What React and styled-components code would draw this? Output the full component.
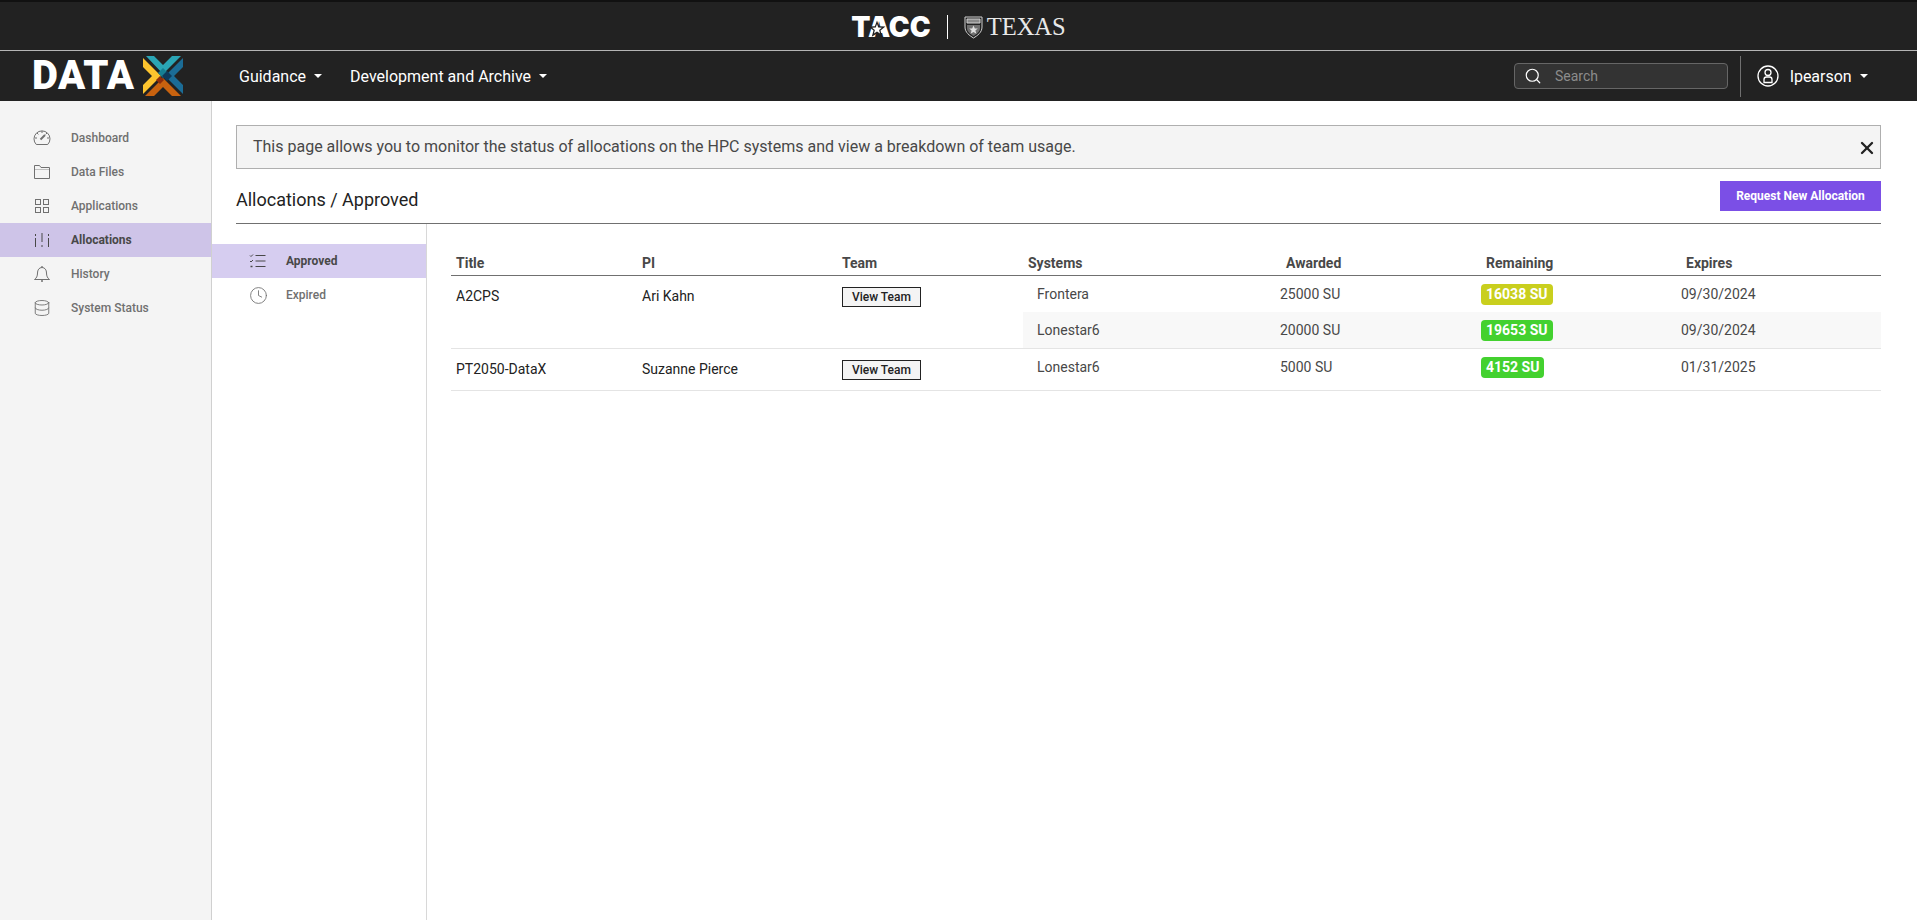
import React from 'react'
import styled, { createGlobalStyle } from 'styled-components'
import { Database, Clock, Search, X } from 'lucide-react'

const GlobalStyle = createGlobalStyle`
    html, body {
        margin: 0;
        padding: 0;
        background: #fff;
    }
    * {
        box-sizing: border-box;
    }
    body {
        font-family: Roboto, "Liberation Sans", sans-serif;
    }
`

const IconSvg = styled.svg.attrs({
    width: 18,
    height: 18,
    viewBox: '0 0 18 18',
    fill: 'none',
    stroke: 'currentColor',
    strokeWidth: 1,
})``

function GaugeIcon() {
    return (
        <IconSvg>
            <path d="M3.300 15.500A8 8 0 1 1 14.700 15.500z" />
            <path d="M9 2v2M2 9h2M14 9h2M4 4l1.400 1.400M14 4l-1.400 1.400" />
            <path d="M7.500 10.500L12 6" strokeWidth="2" />
        </IconSvg>
    )
}

function FolderIcon() {
    return (
        <IconSvg>
            <path d="M1.500 15.500V2.500h5l1.500 2h8.500v11z" />
            <path d="M1.500 6.500h15" opacity="0.4" />
        </IconSvg>
    )
}

function GridIcon() {
    return (
        <IconSvg>
            <rect x="2.500" y="2.500" width="5" height="5" />
            <rect x="10.500" y="2.500" width="5" height="5" />
            <rect x="2.500" y="10.500" width="5" height="5" />
            <rect x="10.500" y="10.500" width="5" height="5" />
        </IconSvg>
    )
}

function SlidersIcon() {
    return (
        <IconSvg>
            <path d="M2.500 3v2M2.500 7v9M9 2v9M9 14v2M15.500 3v2M15.500 7v9" />
        </IconSvg>
    )
}

function BellIcon() {
    return (
        <IconSvg>
            <path d="M9 2.500c-3 0-4.500 2.500-4.500 5.500 0 3-1 5.200-3 6.500h15c-2-1.300-3-3.500-3-6.500 0-3-1.500-5.500-4.500-5.500z" />
            <path d="M9 1v1.500M8 16h2" strokeWidth="1.300" />
        </IconSvg>
    )
}

function ChecksIcon() {
    return (
        <IconSvg>
            <path d="M6.500 3.500h10M6.500 9h10M6.500 14.500h10" strokeWidth="1.200" />
            <path d="M1 3.500l1 1 2-2M1 9l1 1 2-2" />
            <path d="M1.500 14.500h2" strokeWidth="1.500" />
        </IconSvg>
    )
}

function LogoX() {
    return (
        <svg width="40" height="40" viewBox="0 0 40 40">
            <polygon points="3,0 11,0 20,9 29,0 38,0 20,18" fill="#2aa5b5" />
            <polygon points="0,2 18,20 0,38 0,29 9,20 0,11" fill="#fdc42e" />
            <polygon points="40,2 22,20 40,38 40,29 31,20 40,11" fill="#1b6c96" />
            <polygon points="2,40 11,40 20,31 29,40 38,40 20,22" fill="#c8620f" />
            <polygon points="20,12 25,17 20,22 15,17" fill="#167f93" />
            <polygon points="24,15 29,20 24,25 19,20" fill="#0d3a5c" />
            <polygon points="17,20 21,24 17,28 13,24" fill="#8f2d0a" />
        </svg>
    )
}

function Shield() {
    return (
        <svg width="19" height="23" viewBox="0 0 19 23" fill="none" stroke="#d0d0d0" strokeWidth="1">
            <path d="M1 1h17v10c0 5.500-4.500 8.500-8.500 11C5.500 19.500 1 16.500 1 11z" />
            <path d="M3 3h13v4H3z" fill="#8a8a8a" />
            <path d="M3 9h13v3c0 3.500-3 5.800-6.500 8C6 17.800 3 15.500 3 12z" fill="#707070" stroke="none" />
            <path d="M9.500 9.500l1.300 3h3l-2.400 2 1 3.200-2.900-1.800-2.900 1.800 1-3.200-2.400-2h3z" fill="#e0e0e0" stroke="none" />
        </svg>
    )
}

function UserIcon() {
    return (
        <svg width="22" height="22" viewBox="0 0 22 22" fill="none" stroke="#fff" strokeWidth="1.300">
            <circle cx="11" cy="11" r="10" />
            <circle cx="11" cy="7.500" r="3" />
            <path d="M7 17.500v-3c0-1.500 1-2.500 2.500-2.500h3c1.500 0 2.500 1 2.500 2.500v3z" />
        </svg>
    )
}

const navItems = [
    { label: 'Dashboard', icon: <GaugeIcon /> },
    { label: 'Data Files', icon: <FolderIcon /> },
    { label: 'Applications', icon: <GridIcon /> },
    { label: 'Allocations', icon: <SlidersIcon />, active: true },
    { label: 'History', icon: <BellIcon /> },
    { label: 'System Status', icon: <Database size={18} strokeWidth={1.200} /> },
]

const allocations = [
    {
        title: 'A2CPS',
        pi: 'Ari Kahn',
        systems: [
            { name: 'Frontera', awarded: '25000 SU', remaining: '16038 SU', low: true, expires: '09/30/2024' },
            { name: 'Lonestar6', awarded: '20000 SU', remaining: '19653 SU', expires: '09/30/2024' },
        ],
    },
    {
        title: 'PT2050-DataX',
        pi: 'Suzanne Pierce',
        systems: [
            { name: 'Lonestar6', awarded: '5000 SU', remaining: '4152 SU', expires: '01/31/2025' },
        ],
    },
]

function App() {
    return (
        <Page>
            <GlobalStyle />
            <TopBar>
                <Tacc>
                    TACC
                    <TaccStar viewBox="0 0 20 20">
                        <polygon points="10,-2 13,6 22,6.500 15,12 17.500,21 10,16.500 2.500,21 5,12 -2,6.500 7,6" fill="#222" />
                        <polygon points="10,3 11.800,7.800 17,8.200 13,11.400 14.300,16.500 10,13.700 5.700,16.500 7,11.400 3,8.200 8.200,7.800" fill="#fff" />
                    </TaccStar>
                </Tacc>
                <TopDivider />
                <Shield />
                <Texas>TEXAS</Texas>
            </TopBar>
            <NavBar>
                <Logo>
                    <LogoText>DATA</LogoText>
                    <LogoX />
                </Logo>
                <NavLink>Guidance<Caret /></NavLink>
                <NavLink>Development and Archive<Caret /></NavLink>
                <SearchBox>
                    <Search size={18} strokeWidth={1.600} color="#fff" />
                    <span>Search</span>
                </SearchBox>
                <NavDivider />
                <UserMenu>
                    <UserIcon />
                    <UserName>lpearson</UserName>
                    <Caret />
                </UserMenu>
            </NavBar>
            <Layout>
                <Sidebar>
                    {navItems.map((item) => (
                        <SideItem key={item.label} $active={item.active}>
                            <SideIcon>{item.icon}</SideIcon>
                            {item.label}
                        </SideItem>
                    ))}
                </Sidebar>
                <Content>
                    <Banner>
                        This page allows you to monitor the status of allocations on the HPC systems and view a breakdown of team usage.
                        <CloseIcon><X size={20} strokeWidth={2.800} /></CloseIcon>
                    </Banner>
                    <TitleRow>
                        <Title>Allocations / Approved</Title>
                        <RequestButton>Request New Allocation</RequestButton>
                    </TitleRow>
                    <Split>
                        <SubNav>
                            <SubItem $active>
                                <SubIcon><ChecksIcon /></SubIcon>
                                Approved
                            </SubItem>
                            <SubItem>
                                <SubIcon><Clock size={19} strokeWidth={1.100} /></SubIcon>
                                Expired
                            </SubItem>
                        </SubNav>
                        <TableWrap>
                            <HeadRow>
                                <HeadCell>Title</HeadCell>
                                <HeadCell>PI</HeadCell>
                                <HeadCell>Team</HeadCell>
                                <HeadCell>Systems</HeadCell>
                                <HeadCell>Awarded</HeadCell>
                                <HeadCell>Remaining</HeadCell>
                                <HeadCell>Expires</HeadCell>
                            </HeadRow>
                            {allocations.map((row) => (
                                <Row key={row.title}>
                                    <TitleCell>{row.title}</TitleCell>
                                    <PiCell>{row.pi}</PiCell>
                                    <TeamCell><TeamButton>View Team</TeamButton></TeamCell>
                                    <div>
                                        {row.systems.map((s, i) => (
                                            <SystemRow key={s.name} $odd={i % 2 === 1}>
                                                <SystemName>{s.name}</SystemName>
                                                <span>{s.awarded}</span>
                                                <span><Badge $low={s.low}>{s.remaining}</Badge></span>
                                                <span>{s.expires}</span>
                                            </SystemRow>
                                        ))}
                                    </div>
                                </Row>
                            ))}
                        </TableWrap>
                    </Split>
                </Content>
            </Layout>
        </Page>
    )
}

export default App

const Page = styled.div`
    display: flex;
    flex-direction: column;
    height: 100vh;
    overflow: hidden;
`
const TopBar = styled.div`
    height: 51px;
    flex: none;
    display: flex;
    align-items: center;
    justify-content: center;
    background: #222;
    border-top: 2px solid #111;
    border-bottom: 1px solid #b5b5b5;
    color: #fff;
    padding-top: 2px;
`
const Tacc = styled.div`
    position: relative;
    font-family: Inter, Roboto, sans-serif;
    font-weight: 900;
    font-size: 28px;
    line-height: 28px;
`
const TaccStar = styled.svg`
    position: absolute;
    left: 19px;
    top: 9px;
    width: 14px;
    height: 14px;
    overflow: visible;
`
const TopDivider = styled.div`
    width: 1px;
    height: 24px;
    background: #fff;
    margin: 0 16px;
`
const Texas = styled.div`
    font-family: "Liberation Serif", serif;
    font-size: 24.500px;
    line-height: 26px;
    color: #e8e8e8;
    margin-left: 4px;
`
const NavBar = styled.div`
    height: 50px;
    flex: none;
    display: flex;
    align-items: center;
    background: #222;
    color: #fff;
    padding-left: 32px;
`
const Logo = styled.div`
    display: flex;
    align-items: center;
    width: 207px;
    gap: 8px;
`
const LogoText = styled.div`
    font-family: Roboto, sans-serif;
    font-weight: 900;
    font-size: 40px;
    line-height: 40px;
    letter-spacing: 0.5px;
`
const NavLink = styled.div`
    display: flex;
    align-items: center;
    font-size: 16px;
    margin-right: 28px;
`
const Caret = styled.span`
    display: inline-block;
    margin-left: 8px;
    border-top: 4px solid #fff;
    border-left: 4px solid transparent;
    border-right: 4px solid transparent;
`
const SearchBox = styled.div`
    margin-left: auto;
    width: 214px;
    height: 26px;
    display: flex;
    align-items: center;
    gap: 13px;
    padding-left: 9px;
    background: #333;
    border: 1px solid #666;
    border-radius: 4px;
    font-size: 14px;
    color: #8c8c8c;
`
const NavDivider = styled.div`
    width: 1px;
    height: 41px;
    background: #707070;
    margin: 0 16px 0 12px;
`
const UserMenu = styled.div`
    display: flex;
    align-items: center;
    width: 160px;
`
const UserName = styled.span`
    font-size: 16px;
    margin-left: 11px;
`
const Layout = styled.div`
    flex: 1;
    display: flex;
    min-height: 0;
`
const Sidebar = styled.div`
    width: 212px;
    flex: none;
    padding-top: 20px;
    background: #f4f4f4;
    border-right: 1px solid #d0d0d0;
`
const SideItem = styled.div`
    height: 34px;
    display: flex;
    align-items: center;
    padding-left: 33px;
    font-size: 12px;
    font-weight: ${(p) => (p.$active ? 700 : 500)};
    color: ${(p) => (p.$active ? '#484848' : '#707070')};
    background: ${(p) => (p.$active ? '#cec4e8' : 'transparent')};
`
const SideIcon = styled.span`
    display: flex;
    width: 38px;
`
const Content = styled.div`
    flex: 1;
    min-width: 0;
    display: flex;
    flex-direction: column;
    padding: 24px 36px 0 24px;
`
const Banner = styled.div`
    position: relative;
    height: 44px;
    display: flex;
    align-items: center;
    padding: 0 0 2px 16px;
    background: #f4f4f4;
    border: 1px solid #afafaf;
    font-size: 16px;
    color: #484848;
`
const CloseIcon = styled.span`
    position: absolute;
    right: 3px;
    top: 12px;
    display: flex;
    color: #222;
`
const TitleRow = styled.div`
    display: flex;
    justify-content: space-between;
    align-items: flex-start;
    margin-top: 12px;
    height: 43px;
    border-bottom: 1px solid #707070;
`
const Title = styled.div`
    font-size: 18px;
    line-height: 38px;
    color: #222;
`
const RequestButton = styled.div`
    width: 161px;
    height: 30px;
    display: flex;
    align-items: center;
    justify-content: center;
    background: #7b4fe6;
    color: #fff;
    font-size: 12px;
    font-weight: 700;
`
const Split = styled.div`
    flex: 1;
    display: flex;
    margin-left: -24px;
`
const SubNav = styled.div`
    width: 215px;
    flex: none;
    padding-top: 20px;
    border-right: 1px solid #d8d8d8;
`
const SubItem = styled.div`
    height: 34px;
    display: flex;
    align-items: center;
    padding-left: 37px;
    font-size: 12px;
    font-weight: ${(p) => (p.$active ? 700 : 500)};
    color: ${(p) => (p.$active ? '#484848' : '#707070')};
    background: ${(p) => (p.$active ? '#d6cdf0' : 'transparent')};
`
const SubIcon = styled.span`
    display: flex;
    width: 37px;
`
const TableWrap = styled.div`
    flex: 1;
    margin-left: 24px;
    font-size: 14px;
    color: #484848;
`
const HeadRow = styled.div`
    display: grid;
    grid-template-columns: 186px 200px 186px 258px 200px 200px 200px;
    height: 52px;
    align-items: end;
    padding-bottom: 3px;
    border-bottom: 1px solid #707070;
`
const HeadCell = styled.div`
    padding-left: 5px;
    font-weight: 700;
    line-height: 18px;
`
const Row = styled.div`
    display: grid;
    grid-template-columns: 186px 200px 186px 1fr;
    min-height: 42px;
    border-bottom: 1px solid #e4e4e4;
    color: #222;
`
const TitleCell = styled.div`
    padding: 11px 0 0 5px;
    line-height: 18px;
`
const PiCell = styled.div`
    padding-top: 11px;
    padding-left: 5px;
    line-height: 18px;
`
const TeamCell = styled.div`
    padding: 11px 0 0 5px;
`
const TeamButton = styled.div`
    width: 79px;
    height: 20px;
    display: flex;
    align-items: center;
    justify-content: center;
    background: #f4f4f4;
    border: 1px solid #222;
    font-size: 12px;
    font-weight: 500;
    color: #222;
`
const SystemRow = styled.div`
    display: grid;
    grid-template-columns: 257px 201px 200px 200px;
    align-items: center;
    height: 36px;
    color: #484848;
    background: ${(p) => (p.$odd ? '#f8f8f8' : 'transparent')};
`
const SystemName = styled.span`
    padding-left: 14px;
`
const Badge = styled.span`
    display: inline-block;
    height: 21px;
    line-height: 21px;
    padding: 0 5px;
    border-radius: 4px;
    background: ${(p) => (p.$low ? '#c9cf1e' : '#43d12f')};
    color: #fff;
    font-weight: 700;
`
